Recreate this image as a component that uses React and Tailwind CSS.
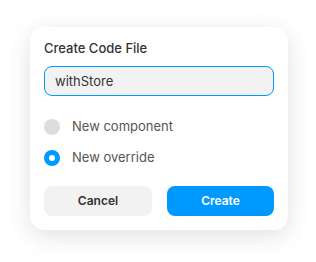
import { useState } from 'react';

const Radio = ({ checked, label, onClick }) => (
    <button type="button" onClick={onClick} className="flex items-center gap-[12px] h-[18px] text-left">
        {checked ? (
            <span className="w-4 h-4 rounded-full bg-[#0099ff] flex items-center justify-center">
                <span className="w-[6px] h-[6px] rounded-full bg-white" />
            </span>
        ) : (
            <span className="w-4 h-4 rounded-full bg-[#dddddd]" />
        )}
        <span className="text-[13px] text-[#555555]">{label}</span>
    </button>
);

const App = () => {
    const [name, setName] = useState('withStore');
    const [kind, setKind] = useState('override');

    return (
        <div className="w-[316px] h-[262px] bg-white pt-[27px] pl-[30px] font-['Inter',sans-serif]">
            <div className="w-[258px] h-[203px] bg-white rounded-[14px] shadow-[0_6px_24px_rgba(0,0,0,0.12)] px-[14px] pt-[13px]">
                <h1 className="text-[13px] font-medium text-[#333333] leading-[16px]">Create Code File</h1>

                <input
                    value={name}
                    onChange={(e) => setName(e.target.value)}
                    className="mt-[10px] w-[230px] h-[30px] rounded-[8px] border border-[#0099ff] bg-[#f2f2f2] px-[10px] text-[13px] text-[#333333] outline-none caret-black"
                />

                <div className="mt-[22px] flex flex-col gap-[13px]">
                    <Radio label="New component" checked={kind === 'component'} onClick={() => setKind('component')} />
                    <Radio label="New override" checked={kind === 'override'} onClick={() => setKind('override')} />
                </div>

                <div className="mt-[19px] flex gap-[15px]">
                    <button className="w-[108px] h-[30px] rounded-[8px] bg-[#f2f2f2] text-[12px] font-semibold text-[#333333]">Cancel</button>
                    <button className="w-[107px] h-[30px] rounded-[8px] bg-[#0099ff] text-[12px] font-semibold text-white">Create</button>
                </div>
            </div>
        </div>
    );
};

export default App;
